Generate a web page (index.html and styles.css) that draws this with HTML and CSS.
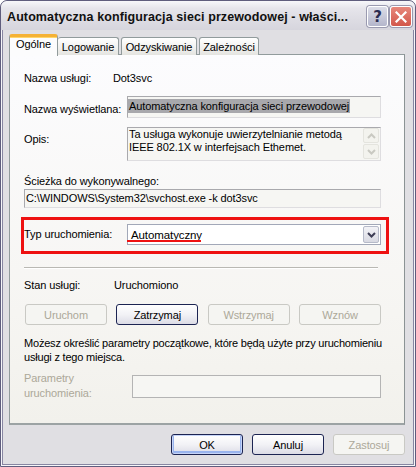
FILE: index.html
```html
<!DOCTYPE html>
<html lang="pl">
<head>
<meta charset="utf-8">
<title>Właściwości usługi</title>
<link rel="stylesheet" href="styles.css">
</head>
<body>
<div class="window">
  <div class="titlebar">
    <span class="title">Automatyczna konfiguracja sieci przewodowej - właści...</span>
    <div class="tb-buttons">
      <span class="tb-btn help">?</span>
      <span class="tb-btn close"><svg width="12" height="12" viewBox="0 0 12 12"><path d="M1.5 1.5 L10.5 10.5 M10.5 1.5 L1.5 10.5" stroke="#fff" stroke-width="2.2" stroke-linecap="square" fill="none"/></svg></span>
    </div>
  </div>
  <div class="client">
    <div class="tabs">
      <div class="tab selected">Ogólne</div>
      <div class="tab t-log">Logowanie</div>
      <div class="tab t-odz">Odzyskiwanie</div>
      <div class="tab t-zal">Zależności</div>
    </div>
    <div class="panel">
      <div class="row r-name">
        <span class="lbl w89">Nazwa usługi:</span>
        <span>Dot3svc</span>
      </div>
      <div class="row r-display">
        <span class="lbl w103 down2">Nazwa wyświetlana:</span>
        <div class="field ro display"><span class="sel">Automatyczna konfiguracja sieci przewodowej</span></div>
      </div>
      <div class="row r-desc">
        <span class="lbl w103 top6">Opis:</span>
        <div class="field ro desc">
          <div class="desc-text">Ta usługa wykonuje uwierzytelnianie metodą<br>IEEE 802.1X w interfejsach Ethemet.</div>
          <div class="vscroll">
            <span class="sbtn"><svg width="9" height="6" viewBox="0 0 9 6"><path d="M1 5 L4.5 1.5 L8 5" stroke="#c9c9c2" stroke-width="2" fill="none"/></svg></span>
            <span class="sbtn"><svg width="9" height="6" viewBox="0 0 9 6"><path d="M1 1 L4.5 4.5 L8 1" stroke="#c9c9c2" stroke-width="2" fill="none"/></svg></span>
          </div>
        </div>
      </div>
      <div class="r-pathlbl">Ścieżka do wykonywalnego:</div>
      <div class="field ro path">C:\WINDOWS\System32\svchost.exe -k dot3svc</div>
      <div class="redbox">
        <span class="lbl w103">Typ uruchomienia:</span>
        <div class="combo">
          <span class="combo-text">Automatyczny</span>
          <span class="underline"></span>
          <span class="drop"><svg width="9" height="6" viewBox="0 0 9 6"><path d="M1 1 L4.5 4.5 L8 1" stroke="#3d3d55" stroke-width="2" fill="none"/></svg></span>
        </div>
      </div>
      <div class="separator"></div>
      <div class="row r-state">
        <span class="lbl w90">Stan usługi:</span>
        <span>Uruchomiono</span>
      </div>
      <div class="svc-buttons">
        <span class="btn disabled">Uruchom</span>
        <span class="btn">Zatrzymaj</span>
        <span class="btn disabled">Wstrzymaj</span>
        <span class="btn disabled">Wznów</span>
      </div>
      <p class="info">Możesz określić parametry początkowe, które będą użyte przy uruchomieniu<br>usługi z tego miejsca.</p>
      <div class="row r-params">
        <span class="lbl w108 dim">Parametry<br>uruchomienia:</span>
        <div class="field params"></div>
      </div>
    </div>
    <div class="footer">
      <span class="btn ok">OK</span>
      <span class="btn">Anuluj</span>
      <span class="btn disabled">Zastosuj</span>
    </div>
  </div>
</div>
</body>
</html>
```
FILE: styles.css
```css
html, body {
  margin: 0;
  padding: 0;
  background: #ffffff;
}
body {
  font-family: "Liberation Sans", Arial, sans-serif;
  font-size: 11px;
  letter-spacing: -0.1px;
  color: #000;
}
.window {
  width: 416px;
  height: 467px;
  box-sizing: border-box;
  border: 1px solid #5f5d7d;
  border-radius: 7px 7px 0 0;
  background: #e0dfe3;
  box-shadow: inset 0 0 0 1px #f6f6f9, inset 0 0 0 2px #8886a2;
  display: flex;
  flex-direction: column;
  overflow: hidden;
}
.titlebar {
  height: 29px;
  flex: none;
  display: flex;
  align-items: center;
  justify-content: space-between;
  padding: 0 3px 0 6px;
  border-radius: 6px 6px 0 0;
  background: linear-gradient(#f7f7fa 0%, #e6e5eb 25%, #dcdbe2 70%, #d6d5dd 100%);
}
.title {
  font-family: "Liberation Sans", Arial, sans-serif;
  font-weight: bold;
  font-size: 12.5px;
  color: #111;
  padding-top: 2px;
  letter-spacing: 0.1px;
}
.tb-buttons {
  display: flex;
  gap: 2px;
  padding-top: 2px;
}
.tb-btn {
  width: 19px;
  height: 19px;
  border: 1px solid #fff;
  border-radius: 3px;
  display: flex;
  align-items: center;
  justify-content: center;
  box-shadow: 0 0 0 1px #9a9ab0;
}
.help {
  background: linear-gradient(#dcdde8, #b4b6cb);
  color: #2b2d52;
  font-weight: bold;
  font-size: 15px;
  font-family: "DejaVu Sans", sans-serif;
}
.close {
  width: 20px;
  background: linear-gradient(#e7877b, #d2574b);
}
.client {
  flex: 1;
  padding: 4px 10px 0 8px;
  display: flex;
  flex-direction: column;
}
.tabs {
  display: flex;
  align-items: flex-end;
  height: 21px;
  position: relative;
  z-index: 1;
  margin-bottom: -1px;
}
.tab {
  height: 18px;
  box-sizing: border-box;
  border: 1px solid #919b9c;
  border-bottom: none;
  border-radius: 3px 3px 0 0;
  background: linear-gradient(#ffffff, #f0f0ee 60%, #e4e4e0);
  display: flex;
  align-items: center;
  justify-content: center;
  padding-top: 1px;
}
.tab.selected {
  width: 49px;
  height: 22px;
  background: #fcfcfd;
  border-top: 3px solid #f5b235;
  box-shadow: inset 0 1px 0 #ffd66b;
  padding-top: 0;
  padding-bottom: 5px;
  margin-bottom: -1px;
}
.t-log { width: 61px; border-left: none; }
.t-odz { width: 76px; margin-left: 2px; }
.t-zal { width: 60px; margin-left: 2px; }
.panel {
  height: 371px;
  box-sizing: border-box;
  border: 1px solid #919b9c;
  border-right-color: #8b9394;
  border-bottom: 2px solid #9ca3a4;
  background: linear-gradient(#fcfcfe, #f6f5f2 70%, #f2f1ec);
  padding: 0 23px 0 14px;
  display: flex;
  flex-direction: column;
}
.row {
  display: flex;
  align-items: flex-start;
  line-height: 13px;
}
.lbl { flex: none; }
.w89 { width: 89px; }
.w90 { width: 90px; }
.w103 { width: 103px; }
.w108 { width: 108px; }
.down2 { padding-top: 7px; }
.top6 { padding-top: 6px; }
.dim { color: #aca899; }
.r-name { margin-top: 17px; }
.r-display { margin-top: 11px; }
.field {
  box-sizing: border-box;
  border: 1px solid #a8a7ab;
  background: #f6f6f3;
}
.ro {
  border-color: #a9a9ad #dedde0 #dedde0 #a9a9ad;
}
.display {
  flex: 1;
  height: 22px;
  padding: 2px 0 0 0;
  line-height: 14px;
}
.sel {
  background: #a8a8ac;
  padding: 0 1px 0 1px;
  display: inline-block;
}
.r-desc { margin-top: 9px; }
.desc {
  flex: 1;
  height: 34px;
  display: flex;
  justify-content: space-between;
}
.desc-text {
  padding: 0 0 0 1px;
  line-height: 13px;
}
.vscroll {
  width: 17px;
  display: flex;
  flex-direction: column;
  gap: 1px;
}
.sbtn {
  width: 16px;
  height: 15px;
  box-sizing: border-box;
  border: 1px solid #e4e4de;
  border-radius: 2px;
  background: #f3f3ee;
  display: flex;
  align-items: center;
  justify-content: center;
}
.r-pathlbl {
  margin-top: 14px;
  line-height: 13px;
}
.path {
  margin-top: 1px;
  height: 19px;
  line-height: 17px;
  padding-left: 1px;
  border-color: #a9a9ad #dedde0 #dedde0 #a9a9ad;
}
.redbox {
  margin: 9px -8px 0 -3px;
  height: 37px;
  box-sizing: border-box;
  border: 3px solid #ee1111;
  padding: 4px 5px 0 0;
  display: flex;
  align-items: flex-start;
  align-self: stretch;
}
.redbox .lbl {
  margin-top: 4px;
}
.combo {
  flex: 1;
  height: 21px;
  box-sizing: border-box;
  border: 1px solid #a2a8b8;
  background: #fff;
  display: flex;
  align-items: center;
  justify-content: space-between;
  position: relative;
  padding-left: 3px;
}
.combo-text { font-size: 11.5px; }
.underline {
  position: absolute;
  left: -1px;
  width: 74px;
  top: 15px;
  height: 2px;
  background: #ee1111;
}
.drop {
  width: 16px;
  height: 17px;
  box-sizing: border-box;
  margin-right: 1px;
  border: 1px solid #b6bac9;
  border-radius: 2px;
  background: linear-gradient(#f3f3f7, #d8d9e2);
  display: flex;
  align-items: center;
  justify-content: center;
}
.separator {
  margin-top: 13px;
  height: 1px;
  margin-right: 3px;
  background: #b9b8b3;
  border-bottom: 1px solid #fff;
}
.r-state { margin-top: 10px; }
.svc-buttons {
  margin-top: 12px;
  margin-left: 1px;
  display: flex;
  justify-content: space-between;
}
.btn {
  width: 82px;
  height: 21px;
  box-sizing: border-box;
  border: 1px solid #1c2452;
  border-radius: 3px;
  background: linear-gradient(#ffffff, #f2f2f6 50%, #dcdce6);
  display: flex;
  align-items: center;
  justify-content: center;
  font-size: 11px;
}
.btn.disabled {
  border-color: #c9c9c4;
  background: #f5f5f2;
  color: #aca899;
}
.info {
  margin: 11px 0 0 0;
  line-height: 14px;
  white-space: nowrap;
  letter-spacing: -0.2px;
}
.r-params {
  margin-top: 7px;
  line-height: 15px;
}
.params {
  flex: 1;
  height: 23px;
  margin-top: 4px;
  border-color: #b4b4b4;
  background: #f6f6f3;
}
.footer {
  margin-top: 9px;
  display: flex;
  justify-content: flex-end;
  gap: 9px;
}
.footer .btn {
  width: 72px;
}
.footer .btn.ok {
  box-shadow: inset 0 0 0 1px #c6d4f7, inset 0 -1px 0 2px #99b4ee;
}
```
